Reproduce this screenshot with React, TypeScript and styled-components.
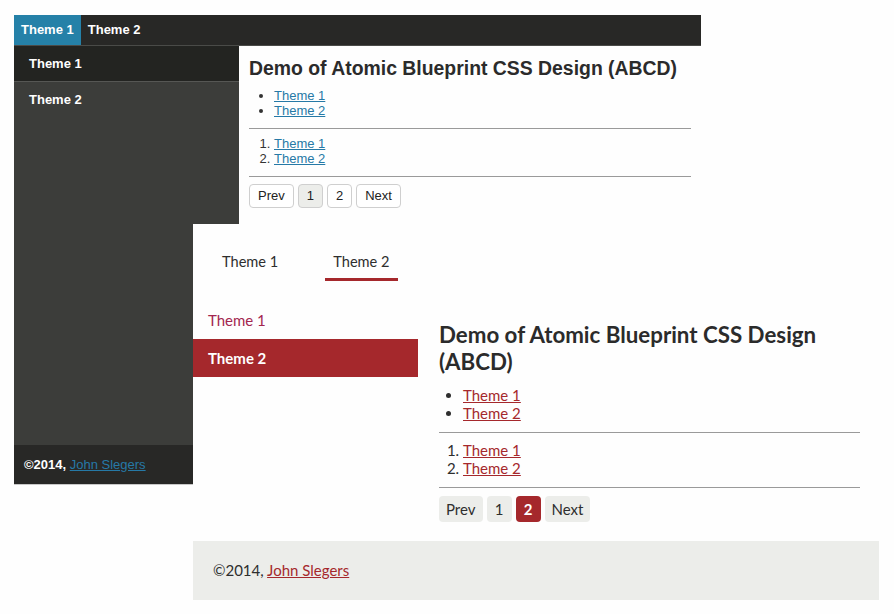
import React from "react";
import styled, { createGlobalStyle } from "styled-components";

const GlobalStyle = createGlobalStyle`
  html, body {
    margin: 0;
    padding: 0;
    background: #fefefe;
  }
  #root {
    position: relative;
    width: 894px;
    height: 614px;
    overflow: hidden;
  }
`;

const Canvas = styled.div`
  position: relative;
  width: 894px;
  height: 614px;
  background: #fefefe;
`;

/* ---------- screenshot 1: dark "Theme 1" ---------- */

const DarkWindow = styled.div`
  position: absolute;
  left: 14px;
  top: 15px;
  width: 687px;
  height: 470px;
  display: flex;
  flex-direction: column;
  font-family: "Liberation Sans", Arial, sans-serif;
  font-size: 13px;
  color: #333;
  background: #fefefe;
`;

const DarkTopBar = styled.nav`
  display: flex;
  height: 30px;
  background: #282826;
  border-bottom: 1px solid #4a4b48;
`;

const DarkTab = styled.a<{ $active?: boolean }>`
  display: block;
  padding: 0 7px;
  line-height: 30px;
  font-weight: bold;
  color: #fff;
  text-decoration: none;
  background: ${(p) => (p.$active ? "#2581a8" : "transparent")};
`;

const DarkBody = styled.div`
  flex: 1;
  display: flex;
  min-height: 0;
`;

const DarkSidebar = styled.aside`
  width: 225px;
  background: #3c3d3a;
  display: flex;
  flex-direction: column;
`;

const DarkSideItem = styled.a<{ $active?: boolean }>`
  display: block;
  height: 35px;
  line-height: 35px;
  padding-left: 15px;
  font-weight: bold;
  color: #fff;
  text-decoration: none;
  background: ${(p) => (p.$active ? "#232421" : "transparent")};
  border-bottom: 1px solid ${(p) => (p.$active ? "#565754" : "transparent")};
`;

const DarkMain = styled.main`
  flex: 1;
  padding: 10px 10px 0;
  background: #fefefe;
`;

const DarkHeading = styled.h1`
  margin: 0 0 8px;
  font-size: 19.4px;
  line-height: 24px;
  font-weight: bold;
  color: #2b2b2b;
`;

const DarkList = styled.ul`
  margin: 0;
  padding-left: 25px;
  line-height: 15px;
`;

const DarkOrdered = styled.ol`
  margin: 0;
  padding-left: 25px;
  line-height: 15px;
`;

const DarkLink = styled.a`
  color: #2679a6;
  text-decoration: underline;
`;

const DarkRule = styled.hr`
  margin: 10px 0 7px;
  border: 0;
  border-top: 1px solid #9a9a9a;
  height: 0;
`;

const DarkPager = styled.div`
  display: flex;
  gap: 4px;
`;

const DarkPageButton = styled.a<{ $active?: boolean }>`
  display: block;
  height: 22px;
  line-height: 22px;
  padding: 0 8px;
  border: 1px solid #cfcfcf;
  border-radius: 4px;
  color: #222;
  text-decoration: none;
  background: ${(p) => (p.$active ? "#ecedea" : "#fff")};
`;

const DarkFooter = styled.footer`
  height: 39px;
  line-height: 39px;
  padding-left: 10px;
  background: #282826;
  border-bottom: 1px solid #c8c8c8;
  color: #fff;
`;

const Strong = styled.b`
  font-weight: bold;
`;

/* ---------- screenshot 2: light "Theme 2" ---------- */

const LightWindow = styled.div`
  position: absolute;
  left: 193px;
  top: 224px;
  width: 686px;
  height: 376px;
  display: flex;
  flex-direction: column;
  font-family: Lato, "Open Sans", sans-serif;
  font-size: 15px;
  color: #2e2e2e;
  background: #fefefe;
`;

const LightNav = styled.nav`
  display: flex;
  gap: 39px;
  padding-left: 21px;
`;

const LightTab = styled.a<{ $active?: boolean }>`
  display: block;
  padding: 29px 8px 7px;
  line-height: 18px;
  font-size: 14.6px;
  color: #2e2e2e;
  text-decoration: none;
  border-bottom: 3px solid ${(p) => (p.$active ? "#a5282c" : "transparent")};
`;

const LightBody = styled.div`
  flex: 1;
  display: flex;
  min-height: 0;
`;

const LightSidebar = styled.aside`
  width: 225px;
  padding-top: 20px;
  display: flex;
  flex-direction: column;
`;

const LightSideItem = styled.a<{ $active?: boolean }>`
  display: block;
  height: 38px;
  line-height: 38px;
  padding-left: 15px;
  text-decoration: none;
  font-weight: ${(p) => (p.$active ? "bold" : "normal")};
  color: ${(p) => (p.$active ? "#fff" : "#a3264f")};
  background: ${(p) => (p.$active ? "#a5282c" : "transparent")};
`;

const LightMain = styled.main`
  flex: 1;
  padding: 40px 19px 0 21px;
`;

const LightHeading = styled.h1`
  margin: 0 0 11px;
  font-size: 22.3px;
  line-height: 27px;
  font-weight: bold;
  color: #2b2b2b;
`;

const LightList = styled.ul`
  margin: 0;
  padding-left: 24px;
  line-height: 18px;
`;

const LightOrdered = styled.ol`
  margin: 0;
  padding-left: 24px;
  line-height: 18px;
`;

const LightLink = styled.a`
  color: #a5282c;
  text-decoration: underline;
`;

const LightRule = styled.hr`
  margin: 10px 0 8px;
  border: 0;
  border-top: 1px solid #9a9a9a;
  height: 0;
`;

const LightPager = styled.div`
  display: flex;
  gap: 4px;
`;

const LightPageButton = styled.a<{ $active?: boolean }>`
  display: block;
  min-width: 25px;
  box-sizing: border-box;
  height: 26px;
  line-height: 26px;
  padding: 0 7px;
  border-radius: 4px;
  text-align: center;
  text-decoration: none;
  font-weight: ${(p) => (p.$active ? "bold" : "normal")};
  color: ${(p) => (p.$active ? "#fff" : "#2e2e2e")};
  background: ${(p) => (p.$active ? "#a5282c" : "#ecedea")};
`;

const LightFooter = styled.footer`
  height: 59px;
  line-height: 59px;
  padding-left: 20px;
  background: #ecedea;
`;

const themes = ["Theme 1", "Theme 2"];

const App: React.FC = () => (
  <>
    <GlobalStyle />
    <Canvas>
      <DarkWindow>
        <DarkTopBar>
          <DarkTab $active>Theme 1</DarkTab>
          <DarkTab>Theme 2</DarkTab>
        </DarkTopBar>
        <DarkBody>
          <DarkSidebar>
            <DarkSideItem $active>Theme 1</DarkSideItem>
            <DarkSideItem>Theme 2</DarkSideItem>
          </DarkSidebar>
          <DarkMain>
            <DarkHeading>Demo of Atomic Blueprint CSS Design (ABCD)</DarkHeading>
            <DarkList>
              {themes.map((t) => (
                <li key={t}>
                  <DarkLink href="#">{t}</DarkLink>
                </li>
              ))}
            </DarkList>
            <DarkRule />
            <DarkOrdered>
              {themes.map((t) => (
                <li key={t}>
                  <DarkLink href="#">{t}</DarkLink>
                </li>
              ))}
            </DarkOrdered>
            <DarkRule />
            <DarkPager>
              <DarkPageButton>Prev</DarkPageButton>
              <DarkPageButton $active>1</DarkPageButton>
              <DarkPageButton>2</DarkPageButton>
              <DarkPageButton>Next</DarkPageButton>
            </DarkPager>
          </DarkMain>
        </DarkBody>
        <DarkFooter>
          <Strong>©2014, </Strong>
          <DarkLink href="#">John Slegers</DarkLink>
        </DarkFooter>
      </DarkWindow>

      <LightWindow>
        <LightNav>
          <LightTab>Theme 1</LightTab>
          <LightTab $active>Theme 2</LightTab>
        </LightNav>
        <LightBody>
          <LightSidebar>
            <LightSideItem>Theme 1</LightSideItem>
            <LightSideItem $active>Theme 2</LightSideItem>
          </LightSidebar>
          <LightMain>
            <LightHeading>Demo of Atomic Blueprint CSS Design (ABCD)</LightHeading>
            <LightList>
              {themes.map((t) => (
                <li key={t}>
                  <LightLink href="#">{t}</LightLink>
                </li>
              ))}
            </LightList>
            <LightRule />
            <LightOrdered>
              {themes.map((t) => (
                <li key={t}>
                  <LightLink href="#">{t}</LightLink>
                </li>
              ))}
            </LightOrdered>
            <LightRule />
            <LightPager>
              <LightPageButton>Prev</LightPageButton>
              <LightPageButton>1</LightPageButton>
              <LightPageButton $active>2</LightPageButton>
              <LightPageButton>Next</LightPageButton>
            </LightPager>
          </LightMain>
        </LightBody>
        <LightFooter>
          ©2014, <LightLink href="#">John Slegers</LightLink>
        </LightFooter>
      </LightWindow>
    </Canvas>
  </>
);

export default App;
